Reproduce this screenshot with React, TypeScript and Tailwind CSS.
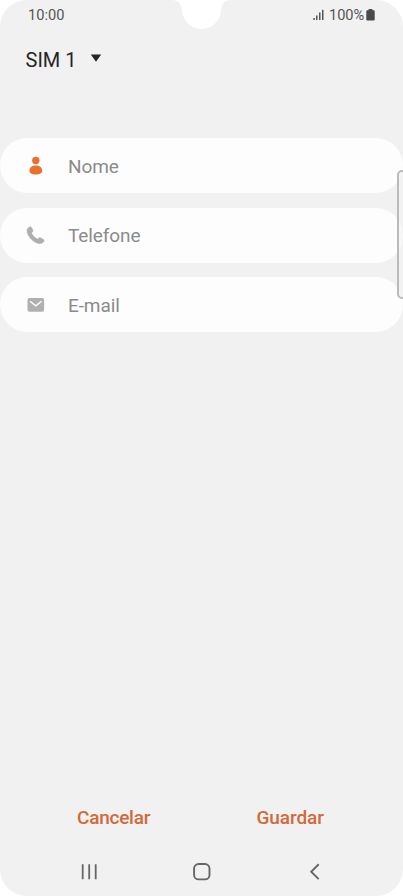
import type { ReactNode } from 'react';

function StatusBar() {
  return (
    <header className="flex h-[30px] items-center justify-between pl-[28px] pr-[27px] text-[14.6px] leading-[30px] text-[#555]">
      <span>10:00</span>
      <div className="flex items-center">
        <svg width="12" height="12" viewBox="0 0 12 12" fill="#555" className="mr-[4px]">
          <rect x="0.3" y="9" width="1.5" height="2" />
          <rect x="3" y="6.5" width="1.5" height="4.5" />
          <rect x="6" y="3.5" width="1.5" height="7.5" />
          <rect x="9" y="0.8" width="1.5" height="10.2" />
        </svg>
        <span className="tracking-[-0.1px]">100%</span>
        <svg width="9" height="12" viewBox="0 0 9 12" fill="#4a4a4a" className="ml-[2px] mr-[1px]">
          <path d="M2.6 0h3.8v1.2h1.5c.5 0 .8.3.8.8v8.8c0 .5-.3.8-.8.8H1.1c-.5 0-.8-.3-.8-.8V2c0-.5.3-.8.8-.8h1.5z" />
        </svg>
      </div>
    </header>
  );
}

function PersonIcon() {
  return (
    <svg width="20" height="20" viewBox="0 0 20 20" fill="#e9702f">
      <circle cx="9.800" cy="4.400" r="3.700" />
      <path d="M3.400 14.700c.2-3.300 2.800-5.100 6.400-5.100s6.200 1.800 6.400 5.100c.1 2.700-2.700 3.700-6.400 3.700s-6.500-1-6.400-3.700z" />
    </svg>
  );
}

function PhoneIcon() {
  return (
    <svg width="20" height="20" viewBox="0 0 20 20" fill="#afafaf" className="mt-[2px]">
      <path d="M3.4 1.1c1-.6 1.7-.3 2.2.6l1.2 2.2c.4.8.2 1.5-.5 2.1-.8.7-.8 1.2-.3 2.1 1.100 1.900 2.600 3.400 4.500 4.500.9.5 1.400.4 2.100-.4.6-.7 1.300-.8 2.100-.3l2.500 1.400c.9.5 1.100 1.300.5 2.200-1 1.700-2.800 2.500-5 2C7.500 16.400 2.300 11.200 1.100 6c-.5-2.200.5-3.900 2.300-4.900z" stroke="#afafaf" strokeWidth="0.500" />
    </svg>
  );
}

function MailIcon() {
  return (
    <svg width="20" height="20" viewBox="0 0 20 20" className="mt-[1px]">
      <rect x="1.500" y="3" width="16.600" height="13.800" rx="2" fill="#afb0b2" />
      <path d="M4 6.200l5.800 4.700L15.600 6.200" fill="none" stroke="#fdfdfd" strokeWidth="1.400" />
    </svg>
  );
}

function Field({ icon, label }: { icon: ReactNode; label: string }) {
  return (
    <div className="flex h-[55px] items-center rounded-[27.5px] bg-[#fdfdfd] pl-[26px]">
      {icon}
      <span className="ml-[22px] pt-[2px] text-[19px] leading-6 tracking-[-0.1px] text-[#8b8b8b]">{label}</span>
    </div>
  );
}

export default function App() {
  return (
    <div className="h-[896px] w-[403px] overflow-hidden bg-white font-['Roboto',sans-serif]">
      <div className="relative flex h-full flex-col overflow-hidden rounded-[27px] bg-[#f1f1f1]">
        <svg className="absolute left-[172px] top-0" width="60" height="30" viewBox="0 0 60 30" fill="#fff">
          <path d="M0 0C6 0 9.500 4 9.800 9.500C10.500 20.500 18.800 29 29.500 29S48.500 20.500 49.200 9.500C49.500 4 53 0 59 0z" />
        </svg>
        <StatusBar />
        <div className="flex h-[60px] items-center gap-[14px] pl-[25.5px] text-[20px] text-[#252525]">
          <span className="leading-[60px]">SIM 1</span>
          <svg width="12" height="8" viewBox="0 0 12 8" fill="#252525" className="-mt-[4px]">
            <path d="M.800.500h10.400L6 7.700z" />
          </svg>
        </div>
        <main className="mt-[48.3px] flex flex-col gap-[14.4px]">
          <Field icon={<PersonIcon />} label="Nome" />
          <Field icon={<PhoneIcon />} label="Telefone" />
          <Field icon={<MailIcon />} label="E-mail" />
        </main>
        <div className="absolute left-[397px] top-[170px] h-[129px] w-[12px] rounded-[5px] border-2 border-[#bbb] bg-[#f4f4f4]/60" />
        <div className="mt-auto flex h-[40px] items-center pl-[77px] pt-[2px] text-[19px] font-medium leading-[40px] tracking-[-0.25px] text-[#d2693a]">
          <span className="w-[179.5px]">Cancelar</span>
          <span className="tracking-[-0.1px]">Guardar</span>
        </div>
        <nav className="flex h-[59px] items-start justify-between pl-[79px] pr-[79px] pt-[25px]">
          <svg width="20" height="20" viewBox="0 0 20 20" stroke="#666" strokeWidth="1.800">
            <path d="M3.700 2.200v15M10.200 2.200v15M16.700 2.200v15" />
          </svg>
          <svg width="20" height="20" viewBox="0 0 20 20" fill="none" stroke="#666" strokeWidth="1.900">
            <rect x="2.100" y="2" width="15.400" height="15.400" rx="4.500" />
          </svg>
          <svg width="20" height="20" viewBox="0 0 20 20" fill="none" stroke="#666" strokeWidth="1.900">
            <path d="M14.700 2.300L7.200 9.700l7.500 7.400" />
          </svg>
        </nav>
      </div>
    </div>
  );
}
